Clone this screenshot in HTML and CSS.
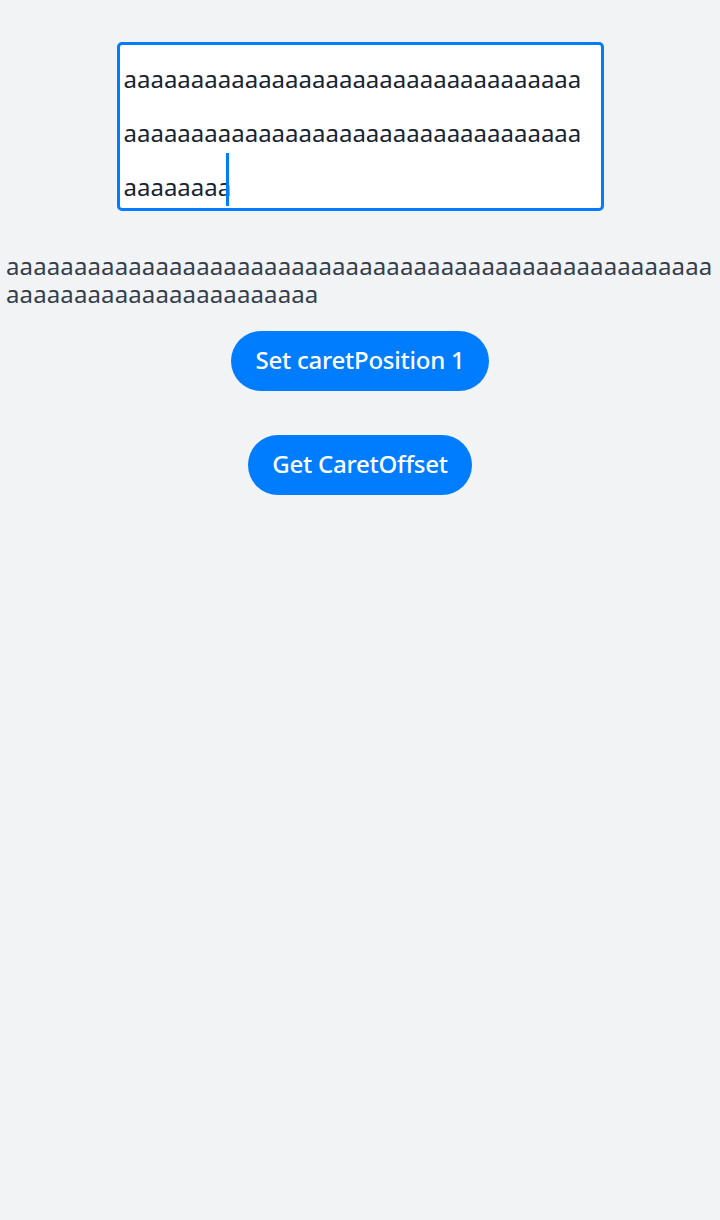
FILE: index.html
```html
<!DOCTYPE html>
<html>
<head>
<meta charset="utf-8">
<link rel="stylesheet" href="styles.css">
</head>
<body>
<main class="page">
  <div class="editor">aaaaaaaaaaaaaaaaaaaaaaaaaaaaaaaaaaaaaaaaaaaaaaaaaaaaaaaaaaaaaaaaaaaaaaaaaaaa<span class="caret"></span></div>
  <p class="mirror">aaaaaaaaaaaaaaaaaaaaaaaaaaaaaaaaaaaaaaaaaaaaaaaaaaaaaaaaaaaaaaaaaaaaaaaaaaa</p>
  <button class="btn btn-set">Set caretPosition 1</button>
  <button class="btn btn-get">Get CaretOffset</button>
</main>
</body>
</html>
```
FILE: styles.css
```css
html, body {
  margin: 0;
  padding: 0;
  background: #f1f3f5;
}
.page {
  display: flex;
  flex-direction: column;
  align-items: center;
  font-family: "Noto Sans", sans-serif;
}
.editor {
  box-sizing: border-box;
  margin-top: 42px;
  width: 487px;
  height: 169px;
  border: 3px solid #007dff;
  border-radius: 5px;
  background: #ffffff;
  padding: 7px 14px 0 4px;
  font-size: 24px;
  line-height: 54px;
  color: #182431;
  word-break: break-all;
  overflow: hidden;
}
.caret {
  display: inline-block;
  width: 3px;
  height: 53px;
  margin-top: -14px;
  margin-left: -5px;
  vertical-align: -10px;
  background: #007dff;
}
.mirror {
  align-self: stretch;
  margin: 41px 0 0;
  padding: 0 0 0 6px;
  font-size: 24px;
  line-height: 28px;
  letter-spacing: 0.12px;
  color: #353f4d;
  word-break: break-all;
}
.btn {
  height: 60px;
  border: none;
  border-radius: 30px;
  padding: 0 24px 3px;
  background: #007dff;
  color: #ffffff;
  font-family: "Noto Sans", sans-serif;
  font-size: 24px;
  font-weight: 500;
  letter-spacing: -0.22px;
}
.btn-set {
  margin-top: 23px;
}
.btn-get {
  margin-top: 44px;
}
```
